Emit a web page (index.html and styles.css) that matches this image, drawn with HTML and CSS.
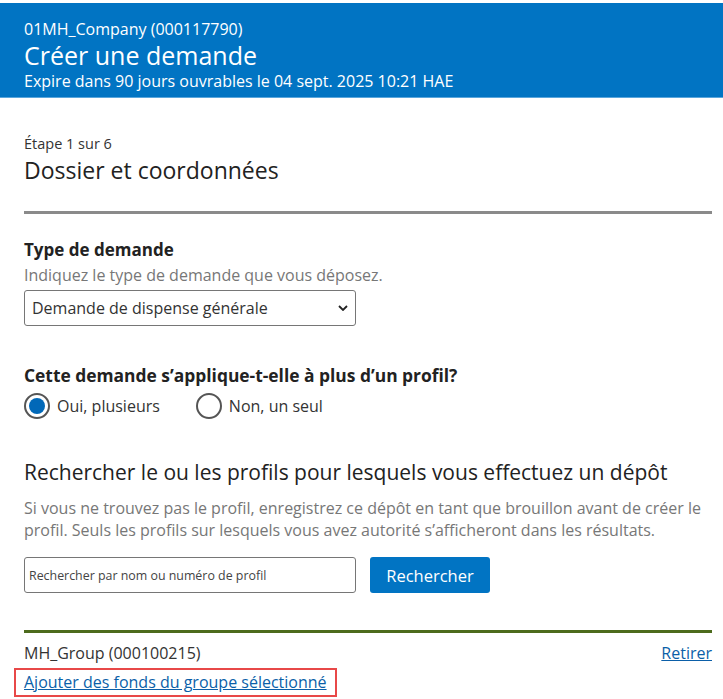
FILE: index.html
```html
<!DOCTYPE html>
<html lang="fr">
<head>
<meta charset="utf-8">
<title>Créer une demande</title>
<link rel="stylesheet" href="styles.css">
</head>
<body>
<header class="banner">
  <div class="banner-company">01MH_Company (000117790)</div>
  <h1 class="banner-title">Créer une demande</h1>
  <div class="banner-expire">Expire dans 90 jours ouvrables le 04 sept. 2025 10:21 HAE</div>
</header>
<main class="content">
  <div class="step">Étape 1 sur 6</div>
  <h2 class="step-title">Dossier et coordonnées</h2>
  <hr class="rule-gray">

  <section class="field">
    <label class="field-label" for="type">Type de demande</label>
    <div class="field-hint">Indiquez le type de demande que vous déposez.</div>
    <div class="select-wrap">
      <select id="type" class="select">
        <option>Demande de dispense générale</option>
      </select>
      <svg class="select-arrow" width="10" height="6" viewBox="0 0 10 6"><path d="M1 1l4 4 4-4" fill="none" stroke="#222" stroke-width="1.8"/></svg>
    </div>
  </section>

  <section class="field question">
    <div class="field-label question-label">Cette demande s’applique-t-elle à plus d’un profil?</div>
    <div class="radios">
      <label class="radio"><span class="radio-dot checked"></span>Oui, plusieurs</label>
      <label class="radio"><span class="radio-dot"></span>Non, un seul</label>
    </div>
  </section>

  <section class="search">
    <h2 class="search-title">Rechercher le ou les profils pour lesquels vous effectuez un dépôt</h2>
    <p class="search-text">Si vous ne trouvez pas le profil, enregistrez ce dépôt en tant que brouillon avant de créer le profil. Seuls les profils sur lesquels vous avez autorité s’afficheront dans les résultats.</p>
    <div class="search-row">
      <input class="search-input" type="text" placeholder="Rechercher par nom ou numéro de profil">
      <button class="btn">Rechercher</button>
    </div>
  </section>

  <hr class="rule-green">
  <div class="result-row">
    <span class="result-name">MH_Group (000100215)</span>
    <a class="link" href="#">Retirer</a>
  </div>
  <div class="add-wrap"><a class="link" href="#">Ajouter des fonds du groupe sélectionné</a></div>
</main>
</body>
</html>
```
FILE: styles.css
```css
* { box-sizing: border-box; }
html, body { margin: 0; padding: 0; background: #fff; }
body {
  font-family: "Open Sans", "Noto Sans", sans-serif;
  color: #333;
  overflow: hidden;
  height: 699px;
}
.banner {
  margin-top: 3px;
  background: #0174c3;
  color: #fff;
  padding: 16px 24px 6px;
  border-bottom: 1px solid #5aa6dc;
}
.banner-company { font-size: 16px; line-height: 20px; }
.banner-title { margin: 0; font-weight: 400; font-size: 25px; line-height: 32px; }
.banner-expire { font-size: 16px; line-height: 20px; }

.content { padding: 0 11px 0 24px; }
.step { margin-top: 36px; font-size: 14.5px; line-height: 20px; color: #333; }
.step-title { margin: 1px 0 0; font-weight: 400; font-size: 23px; line-height: 30px; color: #222; }
.rule-gray { margin: 26px 0 0; border: 0; height: 3px; background: #8a8a8a; }

.field { margin-top: 24px; }
.field-label { display: block; font-weight: 700; font-size: 17px; line-height: 24px; color: #222; }
.question-label { font-size: 17.4px; }
.field-hint { margin-top: 2px; font-size: 16px; line-height: 22px; color: #777; }
.select-wrap { position: relative; width: 332px; margin-top: 4px; }
.select {
  display: block;
  -webkit-appearance: none; appearance: none;
  width: 332px; height: 36px;
  border: 1px solid #767676; border-radius: 3px;
  background: #fff;
  font-family: inherit; font-size: 16px; color: #333;
  padding: 0 24px 0 7px;
}
.select-arrow { position: absolute; right: 8px; top: 15px; pointer-events: none; }

.question { margin-top: 37px; }
.radios { display: flex; gap: 36px; margin-top: 5px; }
.radio { display: flex; align-items: center; gap: 7px; font-size: 16px; line-height: 28px; color: #333; }
.radio-dot {
  width: 26px; height: 26px; border-radius: 50%;
  border: 2px solid #555; background: #fff; position: relative;
}
.radio-dot.checked::after {
  content: ""; position: absolute; left: 3px; top: 3px;
  width: 16px; height: 16px; border-radius: 50%; background: #0168b8;
}

.search { margin-top: 37px; }
.search-title { margin: 0; font-weight: 400; font-size: 21px; line-height: 30px; color: #222; }
.search-text { margin: 10px 0 0; font-size: 16px; line-height: 22px; color: #777; }
.search-row { display: flex; gap: 14px; margin-top: 16px; }
.search-input {
  width: 332px; height: 36px;
  border: 1px solid #767676; border-radius: 3px;
  font-family: inherit; font-size: 12.4px; padding: 0 4px;
}
.search-input::placeholder { color: #444; }
.btn {
  width: 120px; height: 36px; border: 0; border-radius: 3px;
  background: #0174c3; color: #fff;
  font-family: inherit; font-size: 16.5px;
}

.rule-green { margin: 37px 0 0; border: 0; height: 3px; background: #4d6b1d; }
.result-row { display: flex; justify-content: space-between; margin-top: 8px; font-size: 16px; line-height: 24px; }
.link { color: #0b5fa8; text-decoration: underline; font-size: 16px; }
.add-wrap {
  display: inline-block; margin: 3px 0 0 -10px;
  padding: 1px 8px 2px; border: 2px solid #e84848;
  line-height: 22px;
}
```
